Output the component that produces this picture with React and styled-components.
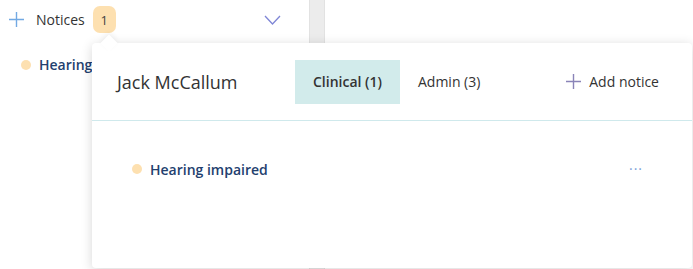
import React from 'react';
import styled, { createGlobalStyle } from 'styled-components';

const GlobalStyle = createGlobalStyle`
  html, body {
    margin: 0;
    padding: 0;
    background: #fff;
    font-family: "Open Sans", "Noto Sans", sans-serif;
  }
`

const Page = styled.div`
  position: relative;
  display: flex;
  width: 693px;
  height: 269px;
  overflow: hidden;
  background: #fff;
`
const Sidebar = styled.div`
  width: 309px;
  display: flex;
  flex-direction: column;
`
const Gutter = styled.div`
  width: 16px;
  background: #ececec;
  border-left: 1px solid #e2e2e2;
  border-right: 1px solid #e2e2e2;
  box-sizing: border-box;
`
const Main = styled.div`
  flex: 1;
`
const NoticesBar = styled.div`
  display: flex;
  align-items: center;
  height: 39px;
  padding: 0 28px 0 9px;
`
const Label = styled.span`
  margin-left: 12px;
  font-size: 14px;
  color: #333;
`
const Badge = styled.span`
  display: inline-flex;
  align-items: center;
  justify-content: center;
  margin-left: 8px;
  width: 23px;
  height: 27px;
  border-radius: 7px;
  background: #fde0b0;
  color: #444;
  font-size: 13px;
`
const Spacer = styled.div`
  flex: 1;
`
const SideItem = styled.div`
  display: flex;
  align-items: center;
  padding: 16px 0 0 21px;
`
const Dot = styled.span`
  width: 10px;
  height: 10px;
  border-radius: 50%;
  background: #fde0b0;
  flex-shrink: 0;
`
const NoticeName = styled.span`
  margin-left: ${props => props.gap || 8}px;
  font-size: 14px;
  font-weight: 600;
  color: #22406e;
  white-space: nowrap;
`
const Popover = styled.div`
  position: absolute;
  left: 92px;
  top: 43px;
  width: 600px;
  height: 225px;
  background: #fff;
  border-radius: 4px;
  box-shadow: 0 2px 12px rgba(0, 0, 0, 0.16);

  &::before {
    content: '';
    position: absolute;
    left: 11px;
    top: -6px;
    width: 12px;
    height: 12px;
    background: #fff;
    transform: rotate(45deg);
    box-shadow: -2px -2px 5px rgba(0, 0, 0, 0.06);
  }
`
const Header = styled.div`
  display: flex;
  align-items: center;
  height: 78px;
  padding: 0 33px 0 25px;
  border-bottom: 1px solid #cfe9ec;
  box-sizing: border-box;
`
const Patient = styled.div`
  font-size: 18px;
  color: #333;
  width: 178px;
`
const Tab = styled.button`
  height: 44px;
  padding: 0 18px;
  border: 0;
  margin: 0;
  background: ${props => props.active ? '#d2ebeb' : 'transparent'};
  font-family: inherit;
  font-size: 14px;
  font-weight: ${props => props.active ? 600 : 400};
  color: #333;
`
const AddNotice = styled.button`
  display: flex;
  align-items: center;
  gap: 8px;
  border: 0;
  padding: 0;
  background: none;
  font-family: inherit;
  font-size: 14px;
  color: #333;
`
const Body = styled.div`
  padding: 38px 49px 0 40px;
`
const Row = styled.div`
  display: flex;
  align-items: center;
  height: 20px;
`
const More = styled.span`
  font-size: 14px;
  letter-spacing: 1px;
  color: #7d9fd8;
  margin-top: -2px;
`

const Plus = ({ color }) => (
  <svg width="15" height="15" viewBox="0 0 15 15">
    <path d="M7.5 0v15M0 7.5h15" stroke={color} strokeWidth="1.4" fill="none" />
  </svg>
)

const Chevron = () => (
  <svg width="17" height="10" viewBox="0 0 17 10">
    <path d="M1 1l7.5 8L16 1" stroke="#7f86d6" strokeWidth="1.3" fill="none" />
  </svg>
)

export default function App() {
  return (
    <Page>
      <GlobalStyle />
      <Sidebar>
        <NoticesBar>
          <Plus color="#72a9e3" />
          <Label>Notices</Label>
          <Badge>1</Badge>
          <Spacer />
          <Chevron />
        </NoticesBar>
        <SideItem>
          <Dot />
          <NoticeName>Hearing impaired</NoticeName>
        </SideItem>
      </Sidebar>
      <Gutter />
      <Main />
      <Popover>
        <Header>
          <Patient>Jack McCallum</Patient>
          <Tab active>Clinical (1)</Tab>
          <Tab>Admin (3)</Tab>
          <Spacer />
          <AddNotice>
            <Plus color="#8a84b8" />
            Add notice
          </AddNotice>
        </Header>
        <Body>
          <Row>
            <Dot />
            <NoticeName gap={8}>Hearing impaired</NoticeName>
            <Spacer />
            <More>···</More>
          </Row>
        </Body>
      </Popover>
    </Page>
  );
}
